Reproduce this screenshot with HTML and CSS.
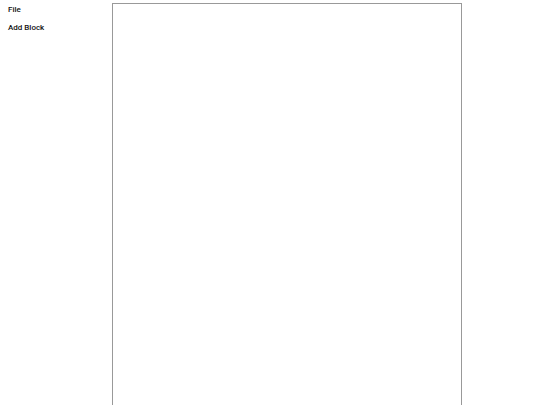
FILE: index.html
```html
<!DOCTYPE html>
<html>
<head>
<meta charset="utf-8">
<link rel="stylesheet" href="styles.css">
</head>
<body>
<div class="app">
  <div class="sidebar">
    <div class="menu-item">File</div>
    <div class="menu-item">Add Block</div>
  </div>
  <div class="canvas"></div>
</div>
</body>
</html>
```
FILE: styles.css
```css
html, body {
  margin: 0;
  padding: 0;
  background: #fff;
  overflow: hidden;
}
.app {
  display: flex;
  align-items: flex-start;
  height: 405px;
}
.sidebar {
  width: 104px;
  padding: 5px 0 0 8px;
  display: flex;
  flex-direction: column;
  gap: 8px;
}
.menu-item {
  font-family: Roboto, "Liberation Sans", sans-serif;
  font-size: 8px;
  font-weight: 500;
  line-height: 10px;
  color: #111;
}
.canvas {
  margin-top: 3px;
  width: 348px;
  height: 600px;
  border: 1px solid #999;
  flex-shrink: 0;
}
```
